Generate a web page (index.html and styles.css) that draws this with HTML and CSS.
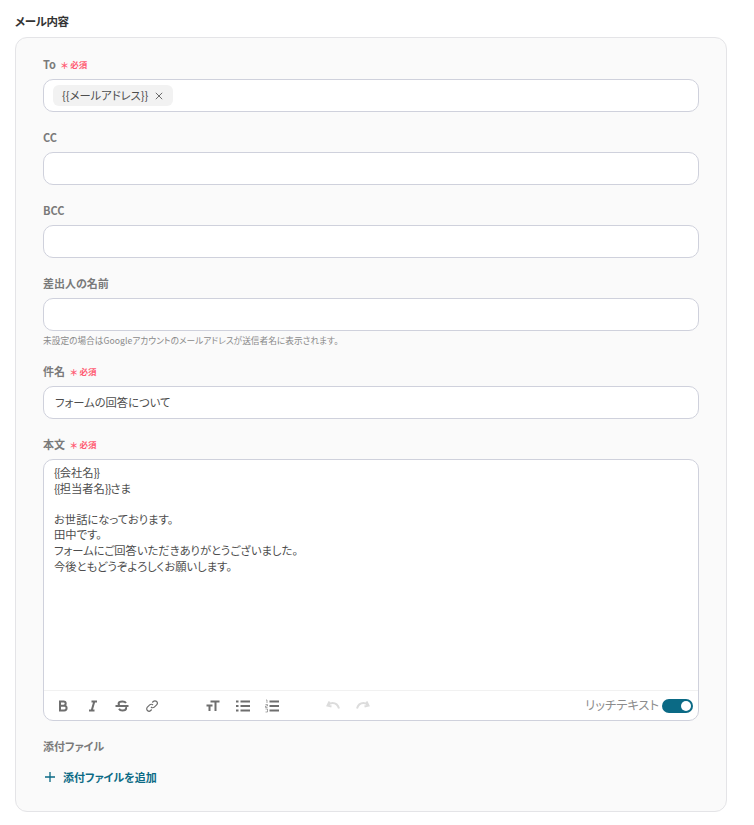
FILE: index.html
```html
<!DOCTYPE html>
<html lang="ja">
<head>
<meta charset="utf-8">
<title>メール内容</title>
<link rel="stylesheet" href="styles.css">
</head>
<body>
<h2 class="title">メール内容</h2>
<section class="card">
  <div class="field">
    <div class="label"><span>To</span><span class="req"><i class="star">＊</i>必須</span></div>
    <div class="input"><span class="chip"><span class="chip-text">{{メールアドレス}}</span>
      <svg class="chip-x" viewBox="0 0 8 8"><path d="M.8.8l6.400 6.400M7.200.8L.8 7.200"/></svg></span></div>
  </div>
  <div class="field">
    <div class="label"><span>CC</span></div>
    <div class="input"></div>
  </div>
  <div class="field">
    <div class="label"><span>BCC</span></div>
    <div class="input"></div>
  </div>
  <div class="field">
    <div class="label"><span>差出人の名前</span></div>
    <div class="input"></div>
    <p class="hint">未設定の場合はGoogleアカウントのメールアドレスが送信者名に表示されます。</p>
  </div>
  <div class="field">
    <div class="label"><span>件名</span><span class="req"><i class="star">＊</i>必須</span></div>
    <div class="input text">フォームの回答について</div>
  </div>
  <div class="field">
    <div class="label"><span>本文</span><span class="req"><i class="star">＊</i>必須</span></div>
    <div class="editor">
      <div class="body"><span class="brace">{{</span>会社名<span class="brace">}}</span><br><span class="brace">{{</span>担当者名<span class="brace">}}</span>さま<br><br>お世話になっております。<br>田中です。<br>フォームにご回答いただきありがとうございました。<br>今後ともどうぞよろしくお願いします。</div>
      <div class="toolbar">
        <div class="tools">
          <svg class="tool" viewBox="0 0 14 14"><path class="thick" d="M4 2.500h3.600a2.100 2.100 0 0 1 0 4.200H4zM4 6.700h4.200a2.400 2.400 0 0 1 0 4.800H4z"/></svg>
          <svg class="tool" viewBox="0 0 14 14"><path class="thick" d="M5.500 2.500h5.500M3 11.500h5.500M8.300 2.500L5.700 11.500"/></svg>
          <svg class="tool" viewBox="0 0 14 14"><path class="thick" d="M11 4c-.6-1-1.800-1.500-3.500-1.500-2 0-3.900.9-3.900 2.300 0 .7.300 1.200.9 1.600M4 9.800c.6 1.100 1.700 1.700 3.300 1.700 2 0 3.800-.9 3.800-2.300 0-.4-.1-.8-.3-1.100M.5 7h13"/></svg>
          <svg class="tool" viewBox="0 0 14 14"><path class="thin" d="M6 8a2.300 2.300 0 0 0 3.300.1l2.300-2.300a2.300 2.300 0 0 0-3.300-3.300L7.300 3.500M8 6a2.300 2.300 0 0 0-3.300-.1L2.400 8.200a2.300 2.300 0 0 0 3.300 3.300l1-1"/></svg>
          <span class="spacer"></span>
          <svg class="tool" viewBox="0 0 14 14"><path class="thick" d="M4.500 2.500h9M9.500 2.500v9.500M.5 6.500h6M3.500 6.500V12"/></svg>
          <svg class="tool" viewBox="0 0 14 14"><path class="thick" d="M4.500 2.500h9.500M4.500 7h9.500M4.500 11.500h9.500M0 2.500h2.500M0 7h2.500M0 11.500h2.500"/></svg>
          <svg class="tool" viewBox="0 0 14 14"><path class="thick" d="M4.500 2.500h9.500M4.500 7h9.500M4.500 11.500h9.500"/><path class="num" d="M1 1h1v3M.5 5.500h2v1.500h-2v1.500h2M.5 10h2v3h-2"/></svg>
          <span class="spacer"></span>
          <svg class="tool off" viewBox="0 0 14 14"><path class="thick" d="M3.500 2.500L1.500 6.500l4 1M1.800 6.300C3 4.800 4.800 4 6.500 4c3 0 5.500 2 6.500 5.500"/></svg>
          <svg class="tool off" viewBox="0 0 14 14"><path class="thick" d="M10.500 2.500l2 4-4 1M12.200 6.300C11 4.800 9.200 4 7.500 4 4.500 4 2 6 1 9.500"/></svg>
        </div>
        <div class="rich"><span class="rich-text">リッチテキスト</span><span class="switch"><span class="knob"></span></span></div>
      </div>
    </div>
  </div>
  <div class="label attach-label"><span>添付ファイル</span></div>
  <div class="add">
    <svg class="plus" viewBox="0 0 10 10"><path d="M5 0v10M0 5h10"/></svg>
    <span>添付ファイルを追加</span>
  </div>
</section>
</body>
</html>
```
FILE: styles.css
```css
* { box-sizing: border-box; }
html, body { margin: 0; padding: 0; background: #fff; }
body {
  width: 754px;
  height: 825px;
  overflow: hidden;
  padding: 12px 27px 0 15px;
  font-family: "Noto Sans CJK JP", "Noto Sans", sans-serif;
  font-feature-settings: "palt";
  color: #4d4d4d;
}
.title {
  margin: 0 0 7px 0;
  font-size: 11.500px;
  letter-spacing: -.4px;
  line-height: 18px;
  font-weight: 700;
  color: #333;
}
.card {
  height: 775px;
  padding: 17px 27px 0;
  background: #fafafa;
  border: 1px solid #e4e4e7;
  border-radius: 12px;
}
.field { margin-bottom: 16px; }
.label {
  display: flex;
  align-items: center;
  gap: 5px;
  height: 18px;
  margin-bottom: 6px;
  font-size: 11px;
  font-weight: 700;
  color: #7a7a7a;
}
.req {
  display: flex;
  align-items: center;
  font-size: 8.500px;
  color: #ff5a72;
}
.star {
  font-style: normal;
  font-size: 9px;
  line-height: 8px;
  margin-right: 2px;
  position: relative;
  top: 2px;
}
.input {
  display: flex;
  align-items: center;
  height: 33px;
  padding: 0 9px;
  background: #fff;
  border: 1px solid #cfd1dc;
  border-radius: 10px;
  font-size: 11.300px;
}
.input.text { padding: 0 11px 2px; }
.chip {
  display: flex;
  align-items: center;
  gap: 7px;
  height: 21px;
  padding: 0 10px 0 9px;
  background: #f2f2f2;
  border-radius: 6px;
}
.chip-text { padding-bottom: 2px; }
.chip-x { width: 8px; height: 8px; fill: none; stroke: #6b6b6b; stroke-width: 1; }
.hint {
  margin: 3px 0 -2px;
  height: 14px;
  font-size: 8.700px;
  line-height: 14px;
  color: #8a8a8a;
}
.editor {
  height: 262px;
  margin-bottom: 16px;
  display: flex;
  flex-direction: column;
  background: #fff;
  border: 1px solid #cfd1dc;
  border-radius: 10px;
}
.body {
  flex: 1;
  padding: 5px 10px;
  font-size: 11.300px;
  line-height: 15.600px;
}
.brace { letter-spacing: -1px; }
.toolbar {
  display: flex;
  align-items: center;
  justify-content: space-between;
  height: 30px;
  padding: 0 5px 0 12px;
  border-top: 1px solid #f1f1f1;
}
.tools { display: flex; align-items: center; gap: 15.700px; }
.spacer { width: 15.500px; }
.tool { width: 14px; height: 14px; fill: none; stroke: #6e6e6e; }
.tool.off { stroke: #dcdcdc; }
.thick { stroke-width: 2; }
.thin { stroke-width: 1.200; }
.num { stroke-width: .6; }
.rich {
  display: flex;
  align-items: center;
  gap: 3px;
  font-size: 12.300px;
  color: #8c8c8c;
}
.rich-text { padding-bottom: 2px; }
.switch {
  display: flex;
  justify-content: flex-end;
  align-items: center;
  width: 31px;
  height: 14px;
  padding-right: 2px;
  background: #0b6a85;
  border-radius: 7px;
}
.knob { width: 10px; height: 10px; background: #fff; border-radius: 50%; }
.attach-label { margin-bottom: 13px; }
.add {
  display: flex;
  align-items: center;
  gap: 8px;
  height: 18px;
  padding-left: 2px;
  font-size: 11px;
  font-weight: 700;
  color: #0b6a85;
}
.plus { width: 10px; height: 10px; fill: none; stroke: #0b6a85; stroke-width: 1.300; }
```
